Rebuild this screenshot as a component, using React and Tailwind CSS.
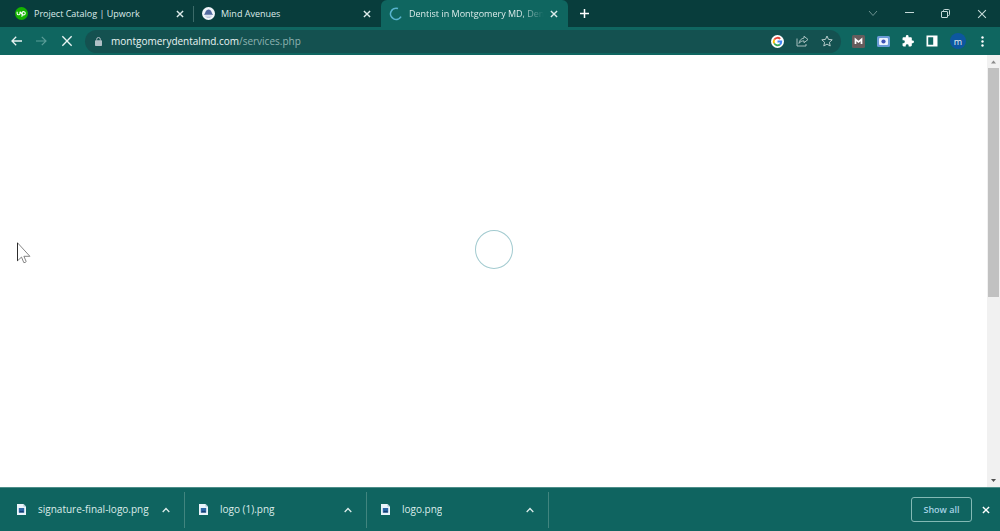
import React from "react";

function CloseIcon({ className = "size-2", width = 1.4 }) {
  return (
    <svg viewBox="0 0 8 8" className={className} fill="none" stroke="currentColor" strokeWidth={width} aria-hidden="true">
      <path d="M.9.9l6.2 6.2M7.100.9L.9 7.100" />
    </svg>
  );
}

function UpworkIcon() {
  return (
    <svg viewBox="0 0 12 12" className="size-[13px] shrink-0" aria-hidden="true">
      <circle cx="6" cy="6" r="6" fill="#14b400" />
      <path d="M2 4.300v1.600a1.300 1.300 0 002.600 0V4.300M6.300 9l.6-3M5 4.300c.5 1.600 1.600 3 3 3a1.500 1.500 0 10-1.400-2.100L6.300 7" fill="none" stroke="#fff" strokeWidth="1" />
    </svg>
  );
}

function AvenuesIcon() {
  return (
    <svg viewBox="0 0 12 12" className="size-[13px] shrink-0" aria-hidden="true">
      <circle cx="6" cy="6" r="6" fill="#f1f5fa" />
      <path d="M1.700 7.200C2.500 6.400 2.800 5.600 3.200 4.600 3.700 3.200 4.800 2.300 6.100 2.300c1.300 0 2.300 1 2.700 2.300.3 1 .7 1.800 1.500 2.600z" fill="#53699f" />
      <path d="M3 8.400h6M4.200 9.700h3.600" stroke="#a9b7d3" strokeWidth=".7" />
    </svg>
  );
}

function SpinnerIcon() {
  return (
    <svg viewBox="0 0 14 14" className="size-[14px] shrink-0" fill="none" aria-hidden="true">
      <path d="M9 1.600A5.600 5.600 0 1012 9.600" stroke="#58b4cf" strokeWidth="1.600" />
    </svg>
  );
}

function Tab({ icon, title, active, divider }) {
  return (
    <div
      className={
        "relative flex h-[27px] w-[187px] min-w-0 items-center pl-2 pr-2.5 " +
        (active ? "rounded-t-md bg-[#0f6660]" : "")
      }
    >
      <button role="tab" aria-selected={!!active} className="flex min-w-0 flex-1 items-center gap-1.5 text-left">
        {icon}
        <span
          className={
            "whitespace-nowrap " +
            (active ? "[mask-image:linear-gradient(to_right,black_82%,transparent)]" : "")
          }
        >
          {title}
        </span>
      </button>
      <button aria-label={"Close " + title}>
        <CloseIcon />
      </button>
      {divider && <span className="absolute right-0 top-1.5 h-4 w-px bg-[#3c6b69]" />}
    </div>
  );
}

function TabStrip() {
  return (
    <header className="flex h-[27px] items-center bg-[#083d3c] pl-[7px] text-[9px] text-[#dcebea]">
      <div role="tablist" className="flex min-w-0">
        <Tab icon={<UpworkIcon />} title="Project Catalog | Upwork" divider />
        <Tab icon={<AvenuesIcon />} title="Mind Avenues" />
        <Tab icon={<SpinnerIcon />} title="Dentist in Montgomery MD, Den" active />
      </div>
      <button aria-label="New tab" className="ml-3 text-white">
        <svg viewBox="0 0 9 9" className="size-[9px]" stroke="currentColor" strokeWidth="1.500"><path d="M4.500 0v9M0 4.500h9" /></svg>
      </button>
      <div className="ml-auto flex shrink-0 items-center gap-[27px] pr-[13px] text-[#c5d9d8]">
        <button aria-label="Search tabs" className="text-[#6d9290]">
          <svg viewBox="0 0 10 10" className="size-[10px]" fill="none" stroke="currentColor"><path d="M1 2l4 4.500L9 2" /></svg>
        </button>
        <button aria-label="Minimize">
          <svg viewBox="0 0 9 9" className="size-[9px]" stroke="currentColor"><path d="M0 3.500h9" /></svg>
        </button>
        <button aria-label="Restore">
          <svg viewBox="0 0 9 9" className="size-[9px]" fill="none" stroke="currentColor">
            <rect x=".5" y="2.500" width="6" height="6" rx=".5" />
            <path d="M2.500 2.500V1.500a1 1 0 011-1h4a1 1 0 011 1v4a1 1 0 01-1 1h-1" />
          </svg>
        </button>
        <button aria-label="Close window"><CloseIcon className="size-[10px]" width={0.9} /></button>
      </div>
    </header>
  );
}

function GoogleIcon() {
  return (
    <svg viewBox="0 0 24 24" className="size-[13px]" aria-hidden="true">
      <circle cx="12" cy="12" r="12" fill="#fff" />
      <g fill="none" strokeWidth="3.400">
        <path d="M17 7.200A7 7 0 006 8.500" stroke="#ea4335" />
        <path d="M6 8.500a7 7 0 000 7" stroke="#fbbc05" />
        <path d="M6 15.500a7 7 0 0010.500 2" stroke="#34a853" />
        <path d="M16.500 17.500A7 7 0 0019 12h-7" stroke="#4285f4" />
      </g>
    </svg>
  );
}

function Toolbar() {
  return (
    <nav aria-label="Browser toolbar" className="flex h-7 items-center bg-[#0f6660] pl-[11px] pr-[13px] text-[#e8f3f2]">
      <div className="flex shrink-0 items-center gap-3.5">
        <button aria-label="Back">
          <svg viewBox="0 0 11 10" className="h-[10px] w-[11px]" fill="none" stroke="currentColor" strokeWidth="1.300"><path d="M11 5H1M5.200.8L1 5l4.200 4.200" /></svg>
        </button>
        <button aria-label="Forward" className="text-[#5b9d98]">
          <svg viewBox="0 0 11 10" className="h-[10px] w-[11px]" fill="none" stroke="currentColor" strokeWidth="1.200"><path d="M0 5h10M5.800.8L10 5 5.800 9.200" /></svg>
        </button>
        <button aria-label="Stop loading"><CloseIcon className="size-3" width={0.9} /></button>
      </div>
      <div className="ml-3 flex h-[23px] min-w-0 flex-1 items-center rounded-full bg-[#145150] pl-2.5 pr-2">
        <svg viewBox="0 0 7 9" className="mr-[9px] h-[9px] w-[7px] shrink-0" aria-hidden="true">
          <rect y="3.300" width="7" height="5.700" rx=".7" fill="#b1bfc6" />
          <path d="M1.700 3.500V2.300a1.800 1.800 0 013.600 0v1.200" fill="none" stroke="#b1bfc6" />
        </svg>
        <a href="#services" className="min-w-0 flex-1 truncate text-[10px] leading-4 text-[#8fb3b1]">
          <span className="text-[#eaf4f3]">montgomerydentalmd.com</span>/services.php
        </a>
        <div className="flex shrink-0 items-center gap-3 text-[#b6cbca]">
          <button aria-label="Search with Google"><GoogleIcon /></button>
          <button aria-label="Share">
            <svg viewBox="0 0 13 12" className="h-3 w-[13px]" fill="none" stroke="currentColor" strokeWidth=".9">
              <path d="M1 3.500v7.500h9V9" />
              <path d="M8 1.200l4 3.300-4 3.200V5.900C5.800 5.900 4.200 6.500 3 8.400c.3-3 2.200-4.900 5-5.300z" strokeLinejoin="round" />
            </svg>
          </button>
          <button aria-label="Bookmark">
            <svg viewBox="0 0 12 12" className="size-3" fill="none" stroke="currentColor"><path d="M6 1l1.500 3.400 3.700.4-2.800 2.500.8 3.700L6 9.100 2.800 11l.8-3.700L.8 4.800l3.700-.4z" /></svg>
          </button>
        </div>
      </div>
      <div className="ml-[11px] flex shrink-0 items-center gap-3">
        <button aria-label="M extension">
          <svg viewBox="0 0 13 13" className="size-[13px]">
            <rect width="13" height="13" rx="1.500" fill="#665c5c" />
            <path d="M3.500 9V4.300l3 2.600 3-2.600V9" fill="none" stroke="#fff" strokeWidth="1.700" />
          </svg>
        </button>
        <button aria-label="Capture extension">
          <svg viewBox="0 0 13 11" className="h-[11px] w-[13px]">
            <rect width="13" height="11" rx="1.500" fill="#6b9bd6" />
            <rect x="2" y="2" width="9" height="7" rx="1" fill="#edf3ff" />
            <circle cx="6.500" cy="5.500" r="2.100" fill="#3f51b5" />
          </svg>
        </button>
        <button aria-label="Extensions">
          <svg viewBox="1 1 22 22" className="size-3" fill="#fff"><path d="M20.500 11H19V7c0-1.100-.9-2-2-2h-4V3.500a2.500 2.500 0 00-5 0V5H4c-1.100 0-2 .9-2 2v3.800h1.500a2.700 2.700 0 010 5.400H2V20c0 1.100.9 2 2 2h3.800v-1.500a2.700 2.700 0 015.400 0V22H17c1.100 0 2-.9 2-2v-4h1.500a2.500 2.500 0 000-5z" /></svg>
        </button>
        <button aria-label="Side panel">
          <svg viewBox="0 0 12 12" className="size-3"><path d="M.5.5h11v11H.5zM2.200 2.200v7.600h5V2.200z" fill="#fff" fillRule="evenodd" /></svg>
        </button>
        <button aria-label="Profile m" className="flex size-4 items-center justify-center rounded-full bg-[#0d57a0] text-[9px] leading-none">m</button>
        <button aria-label="Browser menu">
          <svg viewBox="0 0 9 11" className="h-[11px] w-[9px]" fill="#fff"><circle cx="4.500" cy="1.500" r="1.200" /><circle cx="4.500" cy="5.500" r="1.200" /><circle cx="4.500" cy="9.500" r="1.200" /></svg>
        </button>
      </div>
    </nav>
  );
}

function Page() {
  return (
    <main className="relative flex min-h-0 flex-1 bg-white">
      <div className="flex flex-1 items-center justify-center pb-[43px]">
        <div role="status" aria-label="Loading" className="h-[39px] w-[38px] rounded-[50%] border border-[#a3cbd0]" />
      </div>
      <div className="flex w-[13px] flex-col items-center bg-[#f1f1f1]">
        <svg viewBox="0 0 13 13" className="size-[13px] shrink-0" fill="#8b8b8b"><path d="M6.500 5.500L9 8.500H4z" /></svg>
        <div className="h-[53%] w-[11px] bg-[#c1c1c1]" />
        <svg viewBox="0 0 13 13" className="mt-auto size-[13px] shrink-0" fill="#505050"><path d="M6.500 8L9 5H4z" /></svg>
      </div>
      <svg viewBox="0 0 14 22" className="absolute left-[17px] top-[187px] h-[22px] w-[14px]" fill="#fff" stroke="#777" strokeWidth=".9" aria-hidden="true">
        <path d="M.5.800v18l4-3.700 2.300 5.500q1.500.2 2.400-1l-2.300-5.300h6z" />
        <path d="M.5.800v18" stroke="#222" />
      </svg>
    </main>
  );
}

function Download({ name }) {
  return (
    <div className="flex h-9 w-[182px] min-w-0 items-center border-r border-[#41857f] pl-3.5 pr-3.5">
      <a href="#download" className="flex min-w-0 flex-1 items-center gap-3">
        <svg viewBox="0 0 9 11" className="h-[11px] w-[9px] shrink-0" aria-hidden="true">
          <path d="M0 0h6.500L9 2.500V11H0z" fill="#eaf4fb" />
          <path d="M6.500 0v2.500H9z" fill="#a9c6d2" />
          <rect x="1.800" y="4" width="5.400" height="4.500" fill="#2d67a6" />
          <path d="M1.800 8.500l2-2 1 .7 1-.8 1.400 2.100z" fill="#163c70" />
        </svg>
        <span className="truncate">{name}</span>
      </a>
      <button aria-label={"Options for " + name}>
        <svg viewBox="0 0 8 6" className="h-[6px] w-2" fill="none" stroke="currentColor" strokeWidth="1.300"><path d="M.7 5L4 1.500 7.300 5" /></svg>
      </button>
    </div>
  );
}

function DownloadBar() {
  return (
    <footer className="flex h-11 items-center border-t border-[#4d8e89] bg-[#0f6460] pl-[3px] pr-2.5 text-[10px] text-[#dcecea]">
      <div className="flex min-w-0">
        <Download name="signature-final-logo.png" />
        <Download name="logo (1).png" />
        <Download name="logo.png" />
      </div>
      <button className="ml-auto h-[25px] w-[61px] shrink-0 rounded-[3px] border border-[#83b9b5] text-[9px] font-semibold text-[#a5d2e4]">Show all</button>
      <button aria-label="Close downloads" className="ml-2.5 text-white"><CloseIcon /></button>
    </footer>
  );
}

export default function App() {
  return (
    <div className="flex h-screen flex-col overflow-hidden font-['Open_Sans','Noto_Sans',sans-serif]">
      <TabStrip />
      <Toolbar />
      <Page />
      <DownloadBar />
    </div>
  );
}
